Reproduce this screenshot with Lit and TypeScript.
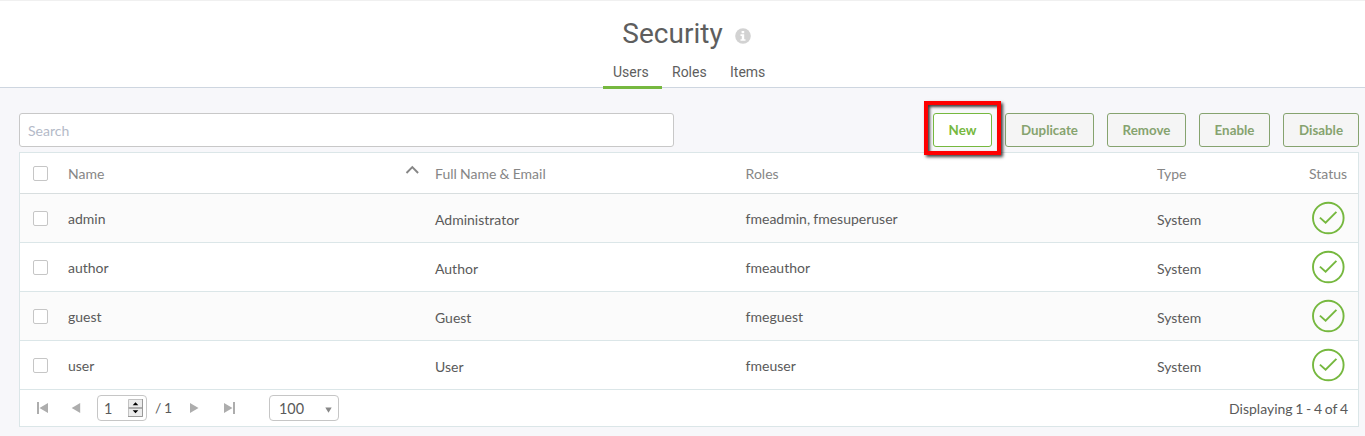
import { LitElement, html, css, svg } from "lit";
import { customElement, property, state } from "lit/decorators.js";
import { classMap } from "lit/directives/class-map.js";

interface User {
  name: string;
  fullName: string;
  roles: string;
  type: string;
}

@customElement("page-header")
class PageHeader extends LitElement {
  @property() heading = "";
  @property({ attribute: false }) tabs: string[] = [];
  @state() private active = 0;

  static styles = css`
    :host {
      display: block;
      box-sizing: border-box;
      height: 88px;
      background: #fff;
      border-top: 1px solid #f0f0f0;
      border-bottom: 1px solid #ced6e0;
      font-family: Roboto, sans-serif;
      color: #5e5e5e;
    }
    .title {
      display: flex;
      justify-content: center;
      align-items: center;
      height: 56px;
      padding-top: 10px;
      box-sizing: border-box;
      gap: 12px;
      margin-left: 8px;
    }
    h1 {
      margin: 0;
      font-size: 28px;
      font-weight: 400;
      line-height: 36px;
    }
    .info {
      width: 16px;
      height: 16px;
      margin-top: 3px;
    }
    nav {
      display: grid;
      grid-template-columns: 59px 58px 60px;
      justify-content: center;
      height: 32px;
      margin-left: 18px;
    }
    .tab {
      box-sizing: border-box;
      height: 32px;
      padding: 5px 0 0 10px;
      font-size: 14px;
      line-height: 20px;
      border-bottom: 3px solid transparent;
      cursor: pointer;
    }
    .active {
      border-color: #76b83f;
    }
  `;

  render() {
    return html`
      <div class="title">
        <h1>${this.heading}</h1>
        <svg class="info" viewBox="0 0 16 16">
          <circle cx="8" cy="8" r="7.8" fill="#d2d2d2" />
          <path d="M6.6 3h2.6v2.3H6.6zM5.5 6.3h3.7v4.9h1.3v1.6h-5v-1.6h1.3V7.9H5.5z" fill="#fff" />
        </svg>
      </div>
      <nav>
        ${this.tabs.map(
          (t, i) => html`<div
            class=${classMap({ tab: true, active: i === this.active })}
            @click=${() => (this.active = i)}
          >${t}</div>`
        )}
      </nav>
    `;
  }
}

@customElement("user-toolbar")
class UserToolbar extends LitElement {
  static styles = css`
    :host {
      display: flex;
      justify-content: space-between;
      height: 34px;
      font-family: Lato, sans-serif;
    }
    input {
      box-sizing: border-box;
      width: 655px;
      height: 34px;
      padding: 1px 8px 0;
      border: 1px solid #c8c8c8;
      border-radius: 3px;
      background: #fff;
      font: 14px Lato, sans-serif;
      outline: none;
    }
    input::placeholder {
      color: #b4bac8;
      opacity: 1;
    }
    .actions {
      display: grid;
      grid-template-columns: 59px 89px 79px 71px 76px;
      gap: 13px;
    }
    .slot {
      position: relative;
    }
    button {
      box-sizing: border-box;
      width: 100%;
      height: 34px;
      padding: 0;
      border: 1px solid #86a36f;
      border-radius: 3px;
      background: #f5f5f5;
      color: #86a36f;
      font: 700 13.333px Lato, sans-serif;
      white-space: nowrap;
    }
    .primary {
      border-color: #76b83f;
      background: #fff;
      color: #76b83f;
    }
    .highlight {
      position: absolute;
      inset: -12px -9px -8px -9px;
      border: 4px solid #fe0000;
      box-shadow: 2px 2px 3px rgba(0, 0, 0, 0.75), inset 2px 2px 3px rgba(0, 0, 0, 0.75);
      pointer-events: none;
    }
  `;

  render() {
    return html`
      <input placeholder="Search" />
      <div class="actions">
        <div class="slot">
          <button class="primary">New</button>
          <div class="highlight"></div>
        </div>
        ${["Duplicate", "Remove", "Enable", "Disable"].map((l) => html`<button>${l}</button>`)}
      </div>
    `;
  }
}

@customElement("user-table")
class UserTable extends LitElement {
  @property({ attribute: false }) users: User[] = [];

  static styles = css`
    :host {
      display: block;
      box-sizing: border-box;
      border: 1px solid #dbe6e8;
      background: #fff;
      color: #5a5a5a;
      font: 14px/20px Lato, sans-serif;
      word-spacing: -0.4px;
    }
    .row {
      display: grid;
      grid-template-columns: 48px 367px 310.6px 411.4px 1fr 56px;
      box-sizing: border-box;
      height: 49px;
      align-items: center;
      border-bottom: 1px solid #dbe6e8;
    }
    .row:nth-child(even) {
      background: #fbfbfb;
    }
    .head {
      height: 41px;
      color: #868686;
      border-bottom-color: #d8dedf;
    }
    .head .cell {
      padding-top: 2px;
    }
    .name {
      display: flex;
      justify-content: space-between;
      padding-right: 16px;
    }
    .low {
      padding-top: 3px;
    }
    .mid {
      padding-top: 1px;
    }
    .status {
      padding-left: 7px;
    }
    .check {
      box-sizing: border-box;
      width: 15px;
      height: 15px;
      margin-left: 13px;
      border: 1px solid #c6c6c6;
      border-radius: 2px;
      background: #fff;
    }
    .ok {
      display: block;
      width: 34px;
      height: 34px;
      margin-left: 9px;
    }
    .sort {
      width: 14px;
      height: 10px;
      margin-top: 1px;
    }
    .footer {
      display: flex;
      box-sizing: border-box;
      height: 36px;
      align-items: center;
      padding: 0 10px 0 16px;
      word-spacing: -0.9px;
    }
    .arrow {
      width: 13px;
      height: 12px;
      fill: #adadad;
    }
    .prev {
      margin-left: 21px;
    }
    .box {
      display: flex;
      align-items: center;
      justify-content: space-between;
      box-sizing: border-box;
      height: 26px;
      border: 1px solid #c6c6c6;
      border-radius: 4px;
      font-size: 14.4px;
    }
    .page {
      width: 50px;
      margin-left: 14px;
      padding: 1px 3px 0 6px;
    }
    .spin {
      width: 15px;
      height: 18px;
      margin-top: -1px;
    }
    .total {
      width: 18px;
      margin-left: 8px;
      margin-top: -1px;
      white-space: nowrap;
    }
    .next {
      margin-left: 15px;
    }
    .last {
      margin-left: 22px;
    }
    .size {
      width: 70px;
      margin-left: 33px;
      padding: 1px 6px 0 9px;
    }
    .caret {
      width: 7px;
      height: 6px;
      margin-top: 2px;
      fill: #888;
    }
    .summary {
      margin-left: auto;
      padding-top: 2px;
    }
  `;

  private arrow(cls: string, shape: unknown) {
    return html`<svg class="arrow ${cls}" viewBox="0 0 13 12">${shape}</svg>`;
  }

  private renderRow(u: User) {
    return html`<div class="row">
      <div class="check"></div>
      <div class="mid">${u.name}</div>
      <div class="low">${u.fullName}</div>
      <div class="mid">${u.roles}</div>
      <div class="low">${u.type}</div>
      <svg class="ok" viewBox="0 0 34 34" fill="none" stroke="#76b83f" stroke-width="1.9">
        <circle cx="17.3" cy="17" r="15.3" />
        <path d="M8.9 16.6l5.7 5.1 10.8-10.8" />
      </svg>
    </div>`;
  }

  render() {
    return html`
      <div class="row head">
        <div class="check"></div>
        <div class="cell name">
          <span>Name</span>
          <svg class="sort" viewBox="0 0 14 10" fill="none" stroke="#868686" stroke-width="1.9">
            <path d="M1.5 8L7.3 2l5.8 6" />
          </svg>
        </div>
        <div class="cell">Full Name &amp; Email</div>
        <div class="cell">Roles</div>
        <div class="cell">Type</div>
        <div class="cell status">Status</div>
      </div>
      ${this.users.map((u) => this.renderRow(u))}
      <div class="footer">
        ${this.arrow("first", svg`<path d="M1 0h2v12H1zM12 1v10L3.5 6z" />`)}
        ${this.arrow("prev", svg`<path d="M10.2 1v10L1.7 6z" />`)}
        <div class="box page">
          <span>1</span>
          <svg class="spin" viewBox="0 0 15 18">
            <path d="M.5.5h14v8H.5zM.5 9.5h14v8H.5z" fill="#ececec" stroke="#c2c2c2" />
            <path d="M14.5 0v17.5H0M0 9h15" fill="none" stroke="#999" />
            <path d="M7.5 3.2l2.8 3h-5.6zM7.5 14.3l2.8-3h-5.6z" fill="#000" />
          </svg>
        </div>
        <span class="total">/ 1</span>
        ${this.arrow("next", svg`<path d="M2 1v10l8.5-5z" />`)}
        ${this.arrow("last", svg`<path d="M10 0h2v12h-2zM1 1v10l8.5-5z" />`)}
        <div class="box size">
          <span>100</span>
          <svg class="caret" viewBox="0 0 7 6"><path d="M.3.5h6.4L3.5 5.8z" /></svg>
        </div>
        <span class="summary">Displaying 1 - 4 of 4</span>
      </div>
    `;
  }
}

@customElement("app-root")
class AppRoot extends LitElement {
  static styles = css`
    :host {
      display: block;
      height: 436px;
      overflow: hidden;
      background: #f7f7fa;
    }
    .content {
      padding: 25px 6px 0 19px;
    }
    user-table {
      margin-top: 5px;
    }
  `;

  private users: User[] = [
    { name: "admin", fullName: "Administrator", roles: "fmeadmin, fmesuperuser", type: "System" },
    { name: "author", fullName: "Author", roles: "fmeauthor", type: "System" },
    { name: "guest", fullName: "Guest", roles: "fmeguest", type: "System" },
    { name: "user", fullName: "User", roles: "fmeuser", type: "System" },
  ];

  render() {
    return html`
      <page-header heading="Security" .tabs=${["Users", "Roles", "Items"]}></page-header>
      <div class="content">
        <user-toolbar></user-toolbar>
        <user-table .users=${this.users}></user-table>
      </div>
    `;
  }
}
